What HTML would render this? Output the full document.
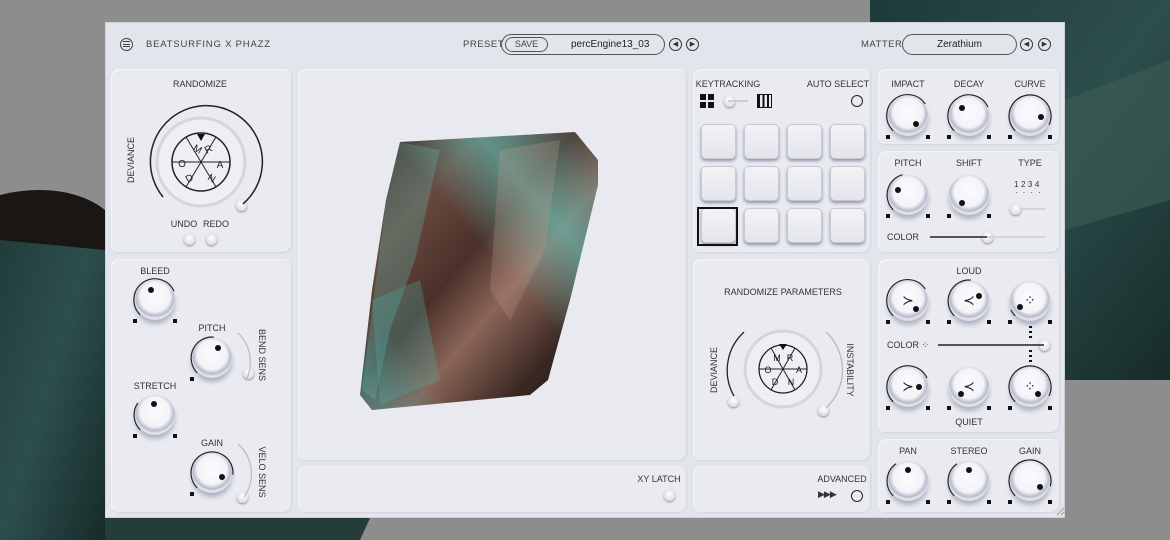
<!DOCTYPE html><html><head><meta charset="utf-8"><style>
*{margin:0;padding:0;box-sizing:border-box}
body{width:1170px;height:540px;overflow:hidden;background:#8d8d8d;font-family:"Liberation Sans",sans-serif;position:relative;color:#333}
.a{position:absolute}
.win{left:105px;top:22px;width:960px;height:496px;background:#e3e5ec;border:1px solid #cfd1d8}
.pn{position:absolute;background:#e9ebf1;border-radius:8px;box-shadow:inset 1px 1px 0 #f5f6f9,inset -1px -1px 0 #d6d8df,0 0 0 1px #dfe1e7}
.t{position:absolute;font-size:9px;color:#333;white-space:nowrap;transform:translateX(-50%)}
.knob{position:absolute;border-radius:50%;background:radial-gradient(circle at 50% 42%,#fbfbfd 0,#f3f4f8 48%,#b9bacb 62%,#e6e7ee 70%,#a8a9bd 86%,#7d7e96 100%);box-shadow:0 4px 5px rgba(70,70,100,.35)}
.dot{position:absolute;width:6px;height:6px;border-radius:50%;background:#111}
.sq{position:absolute;width:4px;height:4px;background:#111}
.pad{position:absolute;width:33px;height:33px;border-radius:4px;background:linear-gradient(#f2f3f7,#e4e5ec);box-shadow:0 0 0 1px #c8c9d3,0 2px 3px 1px #8f90a6}
.bt{position:absolute;width:11px;height:11px;border-radius:50%;background:radial-gradient(circle at 50% 35%,#fff,#cfd0da);box-shadow:0 1px 2px #888}
</style></head><body>
<svg class="a" style="left:0;top:0" width="1170" height="540">
<defs><linearGradient id="rk" x1="0" y1="0" x2="1" y2="1"><stop offset="0" stop-color="#1e3a38"/><stop offset=".5" stop-color="#2d4f4c"/><stop offset="1" stop-color="#162b2a"/></linearGradient>
<linearGradient id="rock" x1="0" y1="0" x2="1" y2="1"><stop offset="0" stop-color="#2a1a17"/><stop offset=".25" stop-color="#6a4a40"/><stop offset=".45" stop-color="#4a3029"/><stop offset=".6" stop-color="#8a6558"/><stop offset=".8" stop-color="#3a2722"/><stop offset="1" stop-color="#1e1210"/></linearGradient>
<linearGradient id="rock2" x1="1" y1="0" x2="0" y2="1"><stop offset="0" stop-color="#60c8c0" stop-opacity=".0"/><stop offset=".25" stop-color="#5fc4ba" stop-opacity=".6"/><stop offset=".45" stop-color="#6dd4ca" stop-opacity="0"/><stop offset=".8" stop-color="#4fa6a0" stop-opacity="0"/><stop offset=".95" stop-color="#4fa6a0" stop-opacity=".5"/></linearGradient></defs>
<path d="M0 195 L60 200 L105 215 L105 540 L0 540Z" fill="url(#rk)"/>
<path d="M0 195 C40 185 80 190 105 210 L105 250 L0 240Z" fill="#1a1614"/>
<path d="M105 518 L370 518 L360 540 L105 540Z" fill="#243c3a"/>
<path d="M870 0 L1170 0 L1170 380 L1065 380 L1065 22 L870 22Z" fill="url(#rk)"/>
<path d="M1065 100 L1170 60 L1170 200 L1065 230Z" fill="#3b5a56" opacity=".7"/>
</svg>
<div class="a win">
<div class="a" style="left:14px;top:15px;width:13px;height:13px;border:1px solid #444;border-radius:50%"></div>
<div class="a" style="left:17px;top:18px;width:7px;height:6px;border-top:1px solid #444;border-bottom:1px solid #444"></div>
<div class="a" style="left:17px;top:21px;width:7px;height:1px;background:#444"></div>
<div class="a" style="left:40px;top:16px;font-size:9.5px;letter-spacing:.8px;color:#444">BEATSURFING X PHAZZ</div>
<div class="a" style="left:357px;top:16px;font-size:9.5px;letter-spacing:.5px;color:#444">PRESET</div>
<div class="a" style="left:395px;top:11px;width:164px;height:21px;border:1px solid #555;border-radius:11px"></div>
<div class="a" style="left:399px;top:14px;width:43px;height:15px;border:1px solid #555;border-radius:8px;font-size:9px;text-align:center;line-height:13px;color:#444">SAVE</div>
<div class="a" style="left:465px;top:16px;font-size:10px;color:#222">percEngine13_03</div>
<div class="a" style="left:563px;top:15px;width:13px;height:13px;border:1px solid #333;border-radius:50%;font-size:7px;line-height:11px;text-align:center">◀</div>
<div class="a" style="left:580px;top:15px;width:13px;height:13px;border:1px solid #333;border-radius:50%;font-size:7px;line-height:11px;text-align:center">▶</div>
<div class="a" style="left:755px;top:16px;font-size:9.5px;letter-spacing:.5px;color:#444">MATTER</div>
<div class="a" style="left:796px;top:11px;width:115px;height:21px;border:1px solid #555;border-radius:11px;font-size:10px;text-align:center;line-height:19px;color:#222">Zerathium</div>
<div class="a" style="left:914px;top:15px;width:13px;height:13px;border:1px solid #333;border-radius:50%;font-size:7px;line-height:11px;text-align:center">◀</div>
<div class="a" style="left:932px;top:15px;width:13px;height:13px;border:1px solid #333;border-radius:50%;font-size:7px;line-height:11px;text-align:center">▶</div>
<div class="pn" style="left:5px;top:46px;width:181px;height:184px"></div>
<div class="pn" style="left:5px;top:236px;width:181px;height:254px"></div>
<div class="pn" style="left:192px;top:46px;width:389px;height:392px;background:#e8eaf0"></div>
<div class="pn" style="left:192px;top:443px;width:389px;height:47px"></div>
<div class="pn" style="left:587px;top:46px;width:178px;height:184px"></div>
<div class="pn" style="left:587px;top:236px;width:178px;height:202px"></div>
<div class="pn" style="left:587px;top:443px;width:178px;height:47px"></div>
<div class="pn" style="left:772px;top:46px;width:182px;height:76px"></div>
<div class="pn" style="left:772px;top:128px;width:182px;height:102px"></div>
<div class="pn" style="left:772px;top:236px;width:182px;height:174px"></div>
<div class="pn" style="left:772px;top:416px;width:182px;height:74px"></div>
</div>
<div id="c"></div>
<svg class="a" style="left:0;top:0;pointer-events:none" width="1170" height="540">
<path d="M400 142 L575 132 L598 160 L598 185 L570 300 L548 380 L530 395 L372 410 L360 395 L372 290 L386 200 Z" fill="url(#rock)"/>
<path d="M400 142 L575 132 L598 160 L598 185 L570 300 L548 380 L530 395 L372 410 L360 395 L372 290 L386 200 Z" fill="url(#rock2)"/>
<path d="M400 142 L440 150 L415 260 L390 330 L375 400 L362 390 L386 200Z" fill="#5fb8b0" opacity=".3"/>
<path d="M500 150 L560 140 L545 250 L510 320 L490 290Z" fill="#c9a090" opacity=".25"/>
<path d="M372 300 L420 280 L440 380 L380 405Z" fill="#4fb0a8" opacity=".3"/>
<path d="M163 197 A56 56 0 1 1 243 204" fill="none" stroke="#222" stroke-width="1.5"/>
<circle cx="201" cy="162" r="44" fill="#eeeff4" stroke="#d4d5dd" stroke-width="3"/>
<circle cx="201" cy="162" r="29" fill="none" stroke="#222" stroke-width="1.5"/>
<g stroke="#222" stroke-width="1"><line x1="186" y1="137" x2="216" y2="187"/><line x1="216" y1="137" x2="186" y2="187"/><line x1="172" y1="162" x2="230" y2="162"/></g>
<path d="M197 134 L205 134 L201 141Z" fill="#111"/>
<g font-family="Liberation Sans" font-size="10" fill="#222" text-anchor="middle"><text x="196" y="152" transform="rotate(30 196 152)">M</text><text x="210" y="152" transform="rotate(-30 210 152)">R</text><text x="220" y="168">A</text><text x="210" y="181" transform="rotate(30 210 181)">N</text><text x="191" y="181" transform="rotate(-30 191 181)">D</text><text x="182" y="167">O</text></g>
<path d="M734 396 A52 52 0 0 1 744 332" fill="none" stroke="#222" stroke-width="1.3"/>
<path d="M826 332 A52 52 0 0 1 826 408" fill="none" stroke="#bbb" stroke-width="1.3"/>
<circle cx="783" cy="369" r="38" fill="#eeeff4" stroke="#d4d5dd" stroke-width="3"/>
<circle cx="783" cy="369" r="24" fill="none" stroke="#222" stroke-width="1.3"/>
<g stroke="#222" stroke-width="1"><line x1="771" y1="348" x2="795" y2="390"/><line x1="795" y1="348" x2="771" y2="390"/><line x1="759" y1="369" x2="807" y2="369"/></g>
<path d="M779 344 L787 344 L783 350Z" fill="#111"/>
<g font-family="Liberation Sans" font-size="9" fill="#222" text-anchor="middle"><text x="777" y="361">M</text><text x="790" y="361">R</text><text x="799" y="373">A</text><text x="791" y="385">N</text><text x="775" y="385">D</text><text x="768" y="373">O</text></g>
<path d="M238 333 A40 40 0 0 1 246 380" fill="none" stroke="#bbb" stroke-width="1.2"/>
<path d="M238 444 A40 40 0 0 1 244 497" fill="none" stroke="#bbb" stroke-width="1.2"/>
<line x1="938" y1="345" x2="1044" y2="345" stroke="#222" stroke-width="1.5"/>
<line x1="930" y1="237" x2="987" y2="237" stroke="#222" stroke-width="1.5"/><line x1="987" y1="237" x2="1045" y2="237" stroke="#ccc" stroke-width="1.5"/>
<line x1="1020" y1="209" x2="1045" y2="209" stroke="#ccc" stroke-width="1.5"/>
<line x1="728" y1="101" x2="748" y2="101" stroke="#ccc" stroke-width="2"/>
<path d="M1057 515 L1064 508 M1061 515 L1064 512" stroke="#999"/>
</svg>
<script>
var c=document.getElementById('c'),h='';
function d(s){h+=s}
function T(x,y,s,st){d('<div class="t" style="left:'+x+'px;top:'+y+'px;'+(st||'')+'">'+s+'</div>')}
function K(x,y,r,ang,sq,arc,icon){
 d('<svg class="a" style="left:'+(x-r-4)+'px;top:'+(y-r-4)+'px" width="'+(2*r+8)+'" height="'+(2*r+8)+'"><path d="'+arcP(r+4,r+1,130,arc)+'" fill="none" stroke="#222" stroke-width="1.2"/></svg>');
 d('<div class="knob" style="left:'+(x-r)+'px;top:'+(y-r)+'px;width:'+2*r+'px;height:'+2*r+'px"></div>');
 var a=(ang-90)*Math.PI/180,rr=r*0.55;
 d('<div class="dot" style="left:'+(x+rr*Math.cos(a)-3)+'px;top:'+(y+rr*Math.sin(a)-3)+'px"></div>');
 if(icon)d('<div class="a" style="left:'+(x-8)+'px;top:'+(y-9)+'px;font-size:14px;width:16px;text-align:center;color:#222">'+icon+'</div>');
 if(sq){d('<div class="sq" style="left:'+(x-r-2)+'px;top:'+(y+r-1)+'px"></div>');if(sq>1)d('<div class="sq" style="left:'+(x+r-2)+'px;top:'+(y+r-1)+'px"></div>');}
}
function arcP(c,r,s,e){function p(a){a=(a-90)*Math.PI/180;return (c+r*Math.cos(a)).toFixed(1)+' '+(c+r*Math.sin(a)).toFixed(1)}
 var st=-135,en=st+e;return 'M'+p(st)+' A'+r+' '+r+' 0 '+(e>180?1:0)+' 1 '+p(en)}
T(200,79,'RANDOMIZE');
d('<div class="t" style="left:131px;top:160px;transform:translate(-50%,-50%) rotate(-90deg)">DEVIANCE</div>');
d('<div class="bt" style="left:236px;top:200px"></div>');
T(184,219,'UNDO');T(216,219,'REDO');
d('<div class="bt" style="left:184px;top:234px"></div><div class="bt" style="left:206px;top:234px"></div>');
T(155,266,'BLEED');K(155,300,20,-20,2,200);
T(212,323,'PITCH');K(212,358,20,30,1,140);
d('<div class="t" style="left:262px;top:355px;transform:translate(-50%,-50%) rotate(90deg)">BEND SENS</div><div class="bt" style="left:243px;top:368px"></div>');
T(155,381,'STRETCH');K(155,415,20,-5,2,80);
T(212,438,'GAIN');K(212,473,20,110,1,230);
d('<div class="t" style="left:262px;top:472px;transform:translate(-50%,-50%) rotate(90deg)">VELO SENS</div><div class="bt" style="left:237px;top:492px"></div>');
T(659,474,'XY LATCH');d('<div class="bt" style="left:664px;top:490px"></div>');
T(728,79,'KEYTRACKING');T(838,79,'AUTO SELECT');
d('<div class="a" style="left:700px;top:94px;width:14px;height:14px;background:linear-gradient(90deg,#111 6px,transparent 6px,transparent 8px,#111 8px)"></div><div class="a" style="left:700px;top:100px;width:14px;height:2px;background:#e9ebf1"></div>');
d('<div class="bt" style="left:724px;top:96px"></div>');
d('<div class="a" style="left:757px;top:94px;width:15px;height:14px;border:1.5px solid #111;background:repeating-linear-gradient(90deg,#111 0 2px,transparent 2px 4.5px)"></div>');
d('<div class="a" style="left:851px;top:95px;width:12px;height:12px;border:1.5px solid #222;border-radius:50%"></div>');
for(var i=0;i<3;i++)for(var j=0;j<4;j++)d('<div class="pad" style="left:'+(702+j*43)+'px;top:'+(125+i*42)+'px"></div>');
d('<div class="a" style="left:697px;top:207px;width:41px;height:39px;border:2px solid #111"></div>');
T(783,287,'RANDOMIZE PARAMETERS');
d('<div class="t" style="left:714px;top:370px;transform:translate(-50%,-50%) rotate(-90deg)">DEVIANCE</div><div class="t" style="left:850px;top:370px;transform:translate(-50%,-50%) rotate(90deg)">INSTABILITY</div>');
d('<div class="bt" style="left:728px;top:396px"></div><div class="bt" style="left:818px;top:405px"></div>');
T(842,474,'ADVANCED');d('<div class="a" style="left:818px;top:489px;font-size:9px;letter-spacing:-1px">▶▶▶</div><div class="a" style="left:851px;top:490px;width:12px;height:12px;border:1.5px solid #222;border-radius:50%"></div>');
T(908,79,'IMPACT');K(908,116,20,135,2,190);
T(969,79,'DECAY');K(969,116,20,-40,2,200);
T(1030,79,'CURVE');K(1030,116,20,95,2,250);
T(908,158,'PITCH');K(908,195,20,-60,2,120);
T(969,158,'SHIFT');K(969,195,20,-140,2,0);
T(1030,158,'TYPE');d('<div class="a" style="left:1014px;top:180px;font-size:8px;letter-spacing:2.5px">1234</div><div class="a" style="left:1015px;top:191px;font-size:8px;letter-spacing:5px;line-height:4px">····</div>');
d('<div class="bt" style="left:1010px;top:204px"></div>');
d('<div class="a" style="left:887px;top:232px;font-size:9px">COLOR</div><div class="bt" style="left:982px;top:232px"></div>');
T(969,266,'LOUD');
K(908,301,20,135,2,190,'≻');K(969,301,20,60,2,140,'≺');K(1030,301,20,-120,2,20,'⁘');
d('<div class="a" style="left:887px;top:340px;font-size:9px">COLOR ⁘</div><div class="bt" style="left:1039px;top:340px"></div>');
d('<div class="a" style="left:1029px;top:326px;width:3px;height:12px;background:repeating-linear-gradient(#111 0 2px,transparent 2px 5px)"></div><div class="a" style="left:1029px;top:350px;width:3px;height:12px;background:repeating-linear-gradient(#111 0 2px,transparent 2px 5px)"></div>');
K(908,387,20,90,2,200,'≻');K(969,387,20,-130,2,0,'≺');K(1030,387,20,130,2,250,'⁘');
T(969,417,'QUIET');
T(908,446,'PAN');K(908,481,20,0,2,100);
T(969,446,'STEREO');K(969,481,20,0,2,100);
T(1030,446,'GAIN');K(1030,481,20,120,2,240);
c.innerHTML=h;
</script>
</body></html>
